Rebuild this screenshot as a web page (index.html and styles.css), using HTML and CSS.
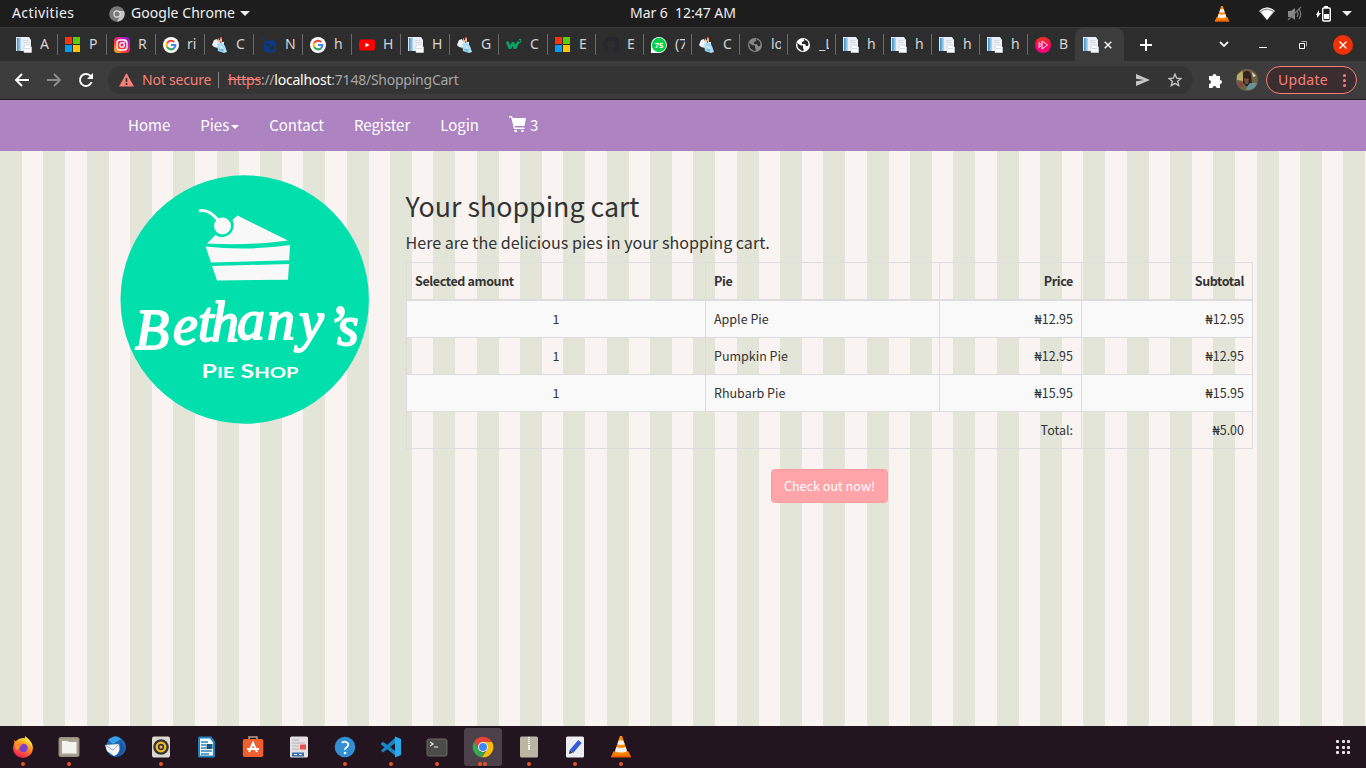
FILE: index.html
```html
<!DOCTYPE html>
<html lang="en">
<head>
<meta charset="utf-8">
<title>Shopping Cart</title>
<link rel="stylesheet" href="styles.css">
</head>
<body>
<svg width="0" height="0" class="defs">
  <defs>
    <linearGradient id="docg"><stop offset="0" stop-color="#3f8ecb"/><stop offset="1" stop-color="#b7dbf4"/></linearGradient>
    <linearGradient id="ig" x1="0" y1="1" x2="1" y2="0"><stop offset="0" stop-color="#fec935"/><stop offset=".35" stop-color="#f8402f"/><stop offset=".65" stop-color="#d61aa0"/><stop offset="1" stop-color="#6a22d6"/></linearGradient>
    <linearGradient id="fx" x1=".8" y1="0" x2=".3" y2="1"><stop offset="0" stop-color="#fff04a"/><stop offset=".45" stop-color="#ff8a1f"/><stop offset="1" stop-color="#f5125f"/></linearGradient>
    <linearGradient id="ps" x1="0" y1="0" x2="0" y2="1"><stop offset="0" stop-color="#f4391c"/><stop offset=".5" stop-color="#fb0560"/><stop offset="1" stop-color="#ff0080"/></linearGradient>
    <symbol id="doc" viewBox="0 0 16 16"><path fill="#dfe7ef" d="M0 0h5v14H0z"/><path fill="url(#docg)" d="M1 1h4v13H1z"/><path fill="#eceff4" d="M5 0h8l2 3v11H5z"/><path stroke="#d5dae3" d="M7 3.500h5M7 5.500h6"/><path fill="#fafbfd" stroke="#cbd2df" stroke-width=".7" d="M8 8h5l2.500 2v5.500H8z"/><path stroke="#d5dae3" d="M9 11.500h5"/></symbol>
    <symbol id="ms" viewBox="0 0 16 16"><path fill="#f8340c" d="M0 0h7v7H0z"/><path fill="#60ca05" d="M8 0h7v7H8z"/><path fill="#069cf4" d="M0 8h7v7H0z"/><path fill="#ffc506" d="M8 8h7v7H8z"/></symbol>
    <symbol id="insta" viewBox="0 0 16 16"><rect width="16" height="16" rx="4" fill="url(#ig)"/><g fill="none" stroke="#fff" stroke-width="1.300"><rect x="3" y="3" width="10" height="10" rx="3"/><circle cx="8" cy="8" r="2.300"/></g><circle cx="10.900" cy="5.100" r=".8" fill="#fff"/></symbol>
    <symbol id="google" viewBox="0 0 16 16"><circle cx="8" cy="8" r="8" fill="#fff"/><g fill="none" stroke-width="2.100"><path stroke="#ea4335" d="M4.200 6A4.400 4.400 0 0 1 11.200 5"/><path stroke="#fbbc05" d="M4.300 10.300A4.500 4.500 0 0 1 4.200 5.800"/><path stroke="#34a853" d="M4.200 10A4.400 4.400 0 0 0 10.900 11.400"/><path stroke="#4285f4" d="M8 8h4.400a4.400 4.400 0 0 1-1.600 3.400"/></g></symbol>
    <symbol id="person" viewBox="0 0 16 16"><path fill="#e8f2f5" d="M0 8l2-5 3-1 1 2 2-1 4 2v4L6 11l-4-1z"/><path fill="#f3b58e" d="M6 1h4v4H6z"/><path fill="#292c36" d="M6 0l1 3h1V1zM10 2h1.500v3H10z"/><path fill="#a6dcf5" d="M5 7l5-2 3 4 2 6-3 1-6-2z"/><path stroke="#fff" d="M1 6l5 3M8 9l5 5"/><path fill="#73b9e3" d="M6 12l6 0-1 3z"/><path fill="#e84037" d="M8 0h2v1.500H8zM8 4h1v2H8z"/></symbol>
    <symbol id="nuget" viewBox="0 0 16 16"><path fill="#083a8b" d="M6 3.500h5q4 0 4 4V12q0 3.500-4 3.500H7q-4 0-4-3.500V7q0-3.500 3-3.500z"/><circle cx="1.500" cy="1.500" r="1.100" fill="#083a8b"/><circle cx="6.500" cy="7.500" r="1.600" fill="#292c30"/><circle cx="10.700" cy="11" r="2.500" fill="#292c30"/></symbol>
    <symbol id="yt" viewBox="0 0 16 16"><rect y="2.500" width="16" height="11" rx="2.500" fill="#f00"/><path fill="#fff" d="M6.500 5.700v4.600L10.500 8z"/></symbol>
    <symbol id="w3" viewBox="0 0 16 16"><path fill="none" stroke="#0aa467" stroke-width="2.600" stroke-linejoin="bevel" d="M1 4.500l3 7 3-6 2 6 3.500-7"/><path fill="none" stroke="#0aa467" d="M13 2.500h2l-1 1.200q2 .2 .5 1.800H13"/></symbol>
    <symbol id="github" viewBox="0 0 16 16"><path fill="#24292f" d="M8 0a8 8 0 0 0-2.500 15.600c.4.100.5-.2.500-.4v-2.700c-2 .4-2.500-.8-3-1.500C2 10 3 10 3.600 11c.6.9 1.400.9 2.500.6C6.200 10.800 4 10.500 4 7.700c0-.8.300-1.500.8-2.100C4.600 5 4.600 4 5 3.200c0 0 1 0 2 .8h3c1-.8 2-.8 2-.8.400 1 .3 1.800.1 2.400 2 2.500.2 5.500-2.100 5.700.5.500.7 1 .7 1.800v2.200c0 .2.100.5.500.4A8 8 0 0 0 8 0z"/></symbol>
    <symbol id="wa" viewBox="0 0 16 16"><path fill="#fff" d="M0 16V7a8 8 0 1 1 8 9z"/><circle cx="8" cy="8" r="7.200" fill="#06cf49"/><text x="8" y="10.800" text-anchor="middle" font-size="7.800" font-weight="700" fill="#fff">75</text></symbol>
    <symbol id="globe" viewBox="0 0 16 16"><circle cx="8" cy="8" r="7" fill="currentColor"/><path fill="#292929" d="M2 6l4 2.500h2V11l1 2.500-2 .5-4-3zM8 2l2 0-1 2-2 1v2h3l1 2h2l.5-2-1-3z"/></symbol>
    <symbol id="play" viewBox="0 0 16 16"><circle cx="8" cy="8" r="8" fill="url(#ps)"/><path fill="none" stroke="#fff" stroke-width=".9" d="M4 5.500v5l3-2.500zM7 4v8l5.500-4z"/></symbol>
    <symbol id="vlc" viewBox="0 0 20 20"><path fill="#f57900" d="M3 14h14l2 5H1z"/><path fill="#ee5f00" d="M1 18h18v1.500H1z"/><path fill="#ff8c0a" d="M9 0h2l5 15q-6 3-12 0z"/><path fill="#f2f2f2" d="M8 4h4l1.300 3.500q-3.300 1.500-6.600 0zM5.800 10q4.200 2 8.400 0l1.200 4q-5.400 2-10.800 0z"/></symbol>
  </defs>
</svg>

<header class="topbar">
  <span class="activities">Activities</span>
  <svg class="app-ico" width="16" height="16" viewBox="0 0 16 16"><circle cx="8" cy="8" r="7.800" fill="#777"/><path fill="#c6c6c6" d="M8 5h7a7.700 7.700 0 0 1-7 10.500L11 10z"/><circle cx="8" cy="8" r="3.700" fill="#ddd"/><circle cx="8" cy="8" r="2.500" fill="#777"/></svg>
  <span class="app-name">Google Chrome</span><i class="caret-top"></i>
  <span class="clock">Mar 6&nbsp; 12:47 AM</span>
  <div class="status">
    <svg width="16" height="16"><use href="#vlc"/></svg>
    <svg class="wifi" width="16" height="14" viewBox="0 0 16 14"><path fill="#9b9b9b" d="M0 4q8-7 16 0l-8 9z"/><path fill="#fff" d="M2 5q6-4 12 0l-6 8z"/><path fill="none" stroke="#fff" d="M.5 4q7.500-6 15 0"/></svg>
    <svg class="mute" width="16" height="16" viewBox="0 0 16 16"><path fill="#888" d="M1 5h3l4-3v12L4 11H1z"/><path fill="none" stroke="#777" stroke-width="1.300" d="M10 5q2 3 0 6M12 3q3.500 5 0 10M1 14L14 1"/></svg>
    <svg class="batt" width="15" height="16" viewBox="0 0 15 16"><path fill="#fff" d="M3 4v3h2L1 12V9H0z"/><path fill="#fff" d="M8 0h4v2H8zM8 8h5v5H8z"/><rect x="6.700" y="2" width="7.600" height="13" rx="1" fill="none" stroke="#fff" stroke-width="1.400"/></svg>
    <i class="caret-top"></i>
  </div>
</header>

<div class="tabs">
  <div class="tab w"><svg><use href="#doc"/></svg><span>A</span></div>
  <div class="tab w"><svg><use href="#ms"/></svg><span>P</span></div>
  <div class="tab w"><svg><use href="#insta"/></svg><span>R</span></div>
  <div class="tab w"><svg><use href="#google"/></svg><span>ri</span></div>
  <div class="tab w"><svg><use href="#person"/></svg><span>C</span></div>
  <div class="tab w"><svg><use href="#nuget"/></svg><span>N</span></div>
  <div class="tab w"><svg><use href="#google"/></svg><span>h</span></div>
  <div class="tab w"><svg><use href="#yt"/></svg><span>H</span></div>
  <div class="tab w"><svg><use href="#doc"/></svg><span>H</span></div>
  <div class="tab w"><svg><use href="#person"/></svg><span>G</span></div>
  <div class="tab w"><svg><use href="#w3"/></svg><span>C</span></div>
  <div class="tab"><svg><use href="#ms"/></svg><span>E</span></div>
  <div class="tab"><svg><use href="#github"/></svg><span>E</span></div>
  <div class="tab"><svg><use href="#wa"/></svg><span>(7</span></div>
  <div class="tab"><svg><use href="#person"/></svg><span>C</span></div>
  <div class="tab grey"><svg><use href="#globe"/></svg><span>lo</span></div>
  <div class="tab"><svg><use href="#globe"/></svg><span>_L</span></div>
  <div class="tab"><svg><use href="#doc"/></svg><span>h</span></div>
  <div class="tab"><svg><use href="#doc"/></svg><span>h</span></div>
  <div class="tab"><svg><use href="#doc"/></svg><span>h</span></div>
  <div class="tab"><svg><use href="#doc"/></svg><span>h</span></div>
  <div class="tab last"><svg><use href="#play"/></svg><span>B</span></div>
  <div class="tab active"><svg><use href="#doc"/></svg><svg class="x" viewBox="0 0 8 8"><path d="M.7.700l6.600 6.600M7.300.700L.7 7.300" stroke="#f1f1f1" stroke-width="1.500"/></svg></div>
  <svg class="plus" width="12" height="12" viewBox="0 0 12 12"><path d="M6 0v12M0 6h12" stroke="#fff" stroke-width="2"/></svg>
  <div class="wincontrols">
    <svg width="10" height="7" viewBox="0 0 10 7"><path d="M1 1l4 4 4-4" fill="none" stroke="#eee" stroke-width="1.800"/></svg>
    <svg class="min" width="8" height="8" viewBox="0 0 8 8"><path d="M0 6.500h8" stroke="#fff"/></svg>
    <svg class="max" width="8" height="8" viewBox="0 0 8 8"><path d="M.5 2.500h5v5h-5z" fill="none" stroke="#fff"/><path d="M2.500.5h5v5" fill="none" stroke="#aaa"/></svg>
    <svg class="close" width="20" height="20" viewBox="0 0 20 20"><circle cx="10" cy="10" r="10" fill="#f03005"/><path d="M6.500 6.500l7 7M13.500 6.500l-7 7" stroke="#fff" stroke-width="1.400"/></svg>
  </div>
</div>

<div class="toolbar">
  <svg width="16" height="16" viewBox="0 0 16 16"><path d="M15 8H2M8 2L2 8l6 6" fill="none" stroke="#fff" stroke-width="1.900"/></svg>
  <svg width="16" height="16" viewBox="0 0 16 16"><path d="M1 8h13M8 2l6 6-6 6" fill="none" stroke="#8b8b8b" stroke-width="1.900"/></svg>
  <svg width="16" height="16" viewBox="0 0 16 16"><path d="M13.600 10A6 6 0 1 1 12.200 3.700L14 5.500" fill="none" stroke="#fff" stroke-width="1.900"/><path d="M15 1v6H9z" fill="#fff"/></svg>
  <div class="omnibox">
    <svg width="15" height="14" viewBox="0 0 15 14"><path fill="#f88078" d="M7.500 0L15 13.500H0z"/><path d="M7.500 5v4M7.500 10v2" stroke="#353535" stroke-width="1.700"/></svg>
    <span class="notsecure">Not secure</span><i class="bar"></i>
    <span class="url"><s>https</s>://<b>localhost</b>:7148/ShoppingCart</span>
    <svg class="send" width="14" height="12" viewBox="0 0 14 12"><path fill="#c5c5c5" d="M0 0l14 6-14 6V7.300L8 6 0 4.700z"/></svg>
    <svg class="star" width="14" height="14" viewBox="0 0 14 14"><path fill="none" stroke="#c5c5c5" stroke-width="1.400" d="M7 1.200l1.700 4 4.200.3-3.200 2.800 1 4.200L7 10.300l-3.700 2.200 1-4.200L1.100 5.500l4.200-.3z"/></svg>
  </div>
  <svg class="ext" width="15" height="15" viewBox="0 0 15 15"><path fill="#fff" d="M1 3h3.500a2 2 0 1 1 4 0H12v4a2 2 0 1 1 0 4v4H8.500a2 2 0 0 0-4 0H1v-4a2 2 0 0 0 0-4z"/></svg>
  <svg class="avatar" width="22" height="22" viewBox="0 0 22 22"><circle cx="11" cy="11" r="11" fill="#716043"/><path fill="#b8ad6b" d="M1 6l5-4 2 5-1 5-6-1z"/><path fill="#30231f" d="M7 4q5-5 8 1l1 9-5 4-4-4z"/><path fill="#7d4a3b" d="M8 9l5 1-1 5-3 0z"/><path fill="#65919a" d="M10 19l4-5 5 0 2 1q-3 6-10 6z"/><path fill="#dddbb8" d="M16 3l4 4-3 1z"/><path fill="#8d4040" d="M1 13l5 1 1 4-3 0z"/></svg>
  <div class="update"><span>Update</span><i></i></div>
</div>

<main class="page">
  <nav class="nav">
    <a>Home</a><a>Pies<i class="caret"></i></a><a>Contact</a><a>Register</a><a>Login</a>
    <a class="cart"><svg width="18" height="18" viewBox="0 0 18 18"><path fill="#fff" d="M0 1h3l.8 2H17l-1.500 8H5.600l.4 1.500h9.500V14H5L2.200 2.500H0zM5 15h3v2H5.700zM12 15h3l-.7 2h-2z"/></svg>3</a>
  </nav>
  <div class="content">
    <svg class="logo" width="250" height="250" viewBox="0 0 250 250">
      <circle cx="124.700" cy="124.500" r="124.200" fill="#00dfac"/>
      <g fill="#f8f8f8"><path d="M117.500 40.500L168 65.500Q128 71 87 68.500L95.500 60Q103 65 110 59Q116 52 112.500 45z"/><circle cx="102.500" cy="51" r="8.500"/><path d="M85.500 71.500Q128 76 170 70l-.8 15.200L91 87.500zM92 91l77-2-1 15.700-71 .8z"/></g>
      <path fill="none" stroke="#f8f8f8" stroke-width="3" d="M79 36q9-3 19 9"/>
      <text class="script" y="174 169 166 166 164 164 165 170 170" x="15 53 78 91 117 147 179 207 217">Bethany’s</text>
      <text class="pie" x="81.500" y="203" textLength="97" lengthAdjust="spacingAndGlyphs">P<tspan class="sc">IE</tspan> S<tspan class="sc">HOP</tspan></text>
    </svg>
    <section class="main">
      <h2>Your shopping cart</h2>
      <h4>Here are the delicious pies in your shopping cart.</h4>
      <table>
        <colgroup><col class="c1"><col class="c2"><col class="c3"><col class="c4"></colgroup>
        <thead><tr><th>Selected amount</th><th>Pie</th><th class="r">Price</th><th class="r">Subtotal</th></tr></thead>
        <tbody>
          <tr class="odd first"><td class="c">1</td><td>Apple Pie</td><td class="r">₦12.95</td><td class="r">₦12.95</td></tr>
          <tr><td class="c">1</td><td>Pumpkin Pie</td><td class="r">₦12.95</td><td class="r">₦12.95</td></tr>
          <tr class="odd"><td class="c">1</td><td>Rhubarb Pie</td><td class="r">₦15.95</td><td class="r">₦15.95</td></tr>
          <tr><td class="r" colspan="3">Total:</td><td class="r">₦5.00</td></tr>
        </tbody>
      </table>
      <div class="actions"><a class="btn">Check out now!</a></div>
    </section>
  </div>
</main>

<footer class="dock">
  <div class="app run"><svg viewBox="0 0 22 22"><circle cx="11" cy="12" r="10" fill="url(#fx)"/><path fill="#ffdc36" d="M13 0q7 5 7.500 11-4-5-8-6z"/><path fill="#ff9523" d="M2 4l4 3 5-1-2 5-5 3z"/><circle cx="11.500" cy="12" r="4.200" fill="#7542cf"/><path fill="#ff8028" d="M4 8q4-1 7 1-3 0-3 3z"/></svg></div>
  <div class="app run"><svg viewBox="0 0 22 22"><rect x=".5" y="1" width="21" height="20" rx="2.500" fill="#979080"/><rect x="2" y="2.500" width="18" height="17" rx="1" fill="#aaa394"/><path fill="#f4f2ed" d="M4 5h6l1 1h7.500v11.500H4z"/></svg></div>
  <div class="app"><svg viewBox="0 0 22 22"><circle cx="12" cy="11" r="10" fill="#2069b6"/><path fill="#38a0ea" d="M4 4q8-7 13-1l-8 5z"/><path fill="#f2f4f8" d="M1 9l14-1 1 9-6 3-7-5z"/><path fill="none" stroke="#9eacbf" d="M1 9l8 5 6-6"/><path fill="#1859a7" d="M15 4q9 7 2 15l-7 2q9-6 5-17z"/></svg></div>
  <div class="app run"><svg viewBox="0 0 22 22"><rect x="2" y="0.500" width="18" height="21" rx="2" fill="#dbd8cf"/><circle cx="11" cy="11" r="7.800" fill="#353535"/><circle cx="11" cy="11" r="4.300" fill="none" stroke="#f1bd21" stroke-width="2.300"/><circle cx="11" cy="11" r="1.500" fill="#efc24b"/></svg></div>
  <div class="app"><svg viewBox="0 0 22 22"><path fill="#237fbd" d="M2 2q0-1.500 1.500-1.500H15l4 5V20q0 1.500-1.500 1.500h-14Q2 21.500 2 20z"/><path fill="#f5fafc" d="M4 2.500h10l3 4v13H4z"/><path stroke="#2d85b9" stroke-width="1.500" d="M5 6h7M5 9h5M5 12h5M5 15h11M5 18h8"/><path fill="#185779" d="M10.500 8h6v5h-6z"/></svg></div>
  <div class="app"><svg viewBox="0 0 22 22"><path fill="none" stroke="#bba388" stroke-width="1.500" d="M7 4V1h8v3"/><rect x=".8" y="3" width="20.500" height="18" rx="2" fill="#ef602f"/><path stroke="#fff" stroke-width="2" fill="none" d="M7 16l4-9 4 9M5 13h12"/></svg></div>
  <div class="app"><svg viewBox="0 0 22 22"><rect x="2" y=".5" width="18" height="21" rx="1.500" fill="#e4e1e3"/><path stroke="#b5b0b6" stroke-width="1.200" d="M4 4h7M4 7h13M4 10h7M4 13h7"/><path fill="#e8504d" d="M12 8.500h6v5h-6z"/><path fill="#386ca6" d="M4 16.500h12v4H4z"/><path stroke="#fff" d="M6 18.500h3M11 18.500h3"/></svg></div>
  <div class="app run"><svg viewBox="0 0 22 22"><circle cx="11" cy="11" r="10.300" fill="#338fd3"/><path d="M8 7q1-2 4-1 4 2 1 5-2 1-2 3" fill="none" stroke="#fff" stroke-width="1.800"/><circle cx="11" cy="17" r="1.300" fill="#fff"/></svg></div>
  <div class="app run"><svg viewBox="0 0 22 22"><path fill="#1687cc" d="M1 7.500l2-1.700L16 15.500v4.500L1 8.500z"/><path fill="#1685c5" d="M1 14.500L16 1v5.500L3 16.500z"/><path fill="#29a8ed" d="M15 .5L21 3v16l-6 2.500z"/></svg></div>
  <div class="app run"><svg viewBox="0 0 22 22"><rect x="1" y="3" width="20" height="17" rx="2" fill="#4b4c4a" stroke="#6a6866"/><path d="M4 6l3 2-3 2M8 11h4" fill="none" stroke="#eee" stroke-width="1.200"/></svg></div>
  <div class="app focus"><svg viewBox="0 0 22 22"><path fill="#ea4335" d="M2.300 5.500A10.300 10.300 0 0 1 20 6H11a5 5 0 0 0-4.500 7z"/><path fill="#34a853" d="M2.200 5.500l4.500 8A5 5 0 0 0 13 15.700l-3 5.500A10.300 10.300 0 0 1 2.200 5.500z"/><path fill="#fbbc05" d="M11 6h9a10.300 10.300 0 0 1-10 15.300l5.300-8A5 5 0 0 0 11 6z"/><circle cx="11" cy="11" r="5" fill="#fff"/><circle cx="11" cy="11" r="4" fill="#4285f4"/></svg></div>
  <div class="app run"><svg viewBox="0 0 22 22"><rect x="2" y=".5" width="18" height="21" rx="1.500" fill="#bcb5a4"/><path stroke="#fff" stroke-width="2" stroke-dasharray="1 1" d="M11 1v12"/><path fill="#eee" d="M10 10h2v4h-2z"/></svg></div>
  <div class="app run"><svg viewBox="0 0 22 22"><rect x="2" y=".5" width="18" height="21" rx="1.500" fill="#ececf3"/><path stroke="#355bd5" stroke-width="4.500" d="M7.500 15.500l8.500-10"/><path fill="#333" d="M5 18l.7-4 3 2.700z"/></svg></div>
  <div class="app run"><svg viewBox="0 0 20 20"><use href="#vlc"/></svg></div>
  <div class="grid-ico"><i></i><i></i><i></i><i></i><i></i><i></i><i></i><i></i><i></i></div>
</footer>
</body>
</html>
```

FILE: styles.css
```css
* { box-sizing: border-box; }
body { margin: 0; width: 1366px; height: 768px; overflow: hidden; display: flex; flex-direction: column; font-family: "Noto Sans", "Open Sans", sans-serif; }
svg { display: block; flex: none; }
.defs { position: absolute; }

.topbar { height: 27px; flex: none; background: #1d1d1d; display: flex; align-items: center; color: #eee; font-size: 14px; padding-left: 12px; }
.topbar span { line-height: 26px; height: 27px; white-space: nowrap; }
.activities { width: 97px; letter-spacing: .4px; }
.app-name { margin-left: 6px; width: 104px; letter-spacing: .05px; }
.caret-top { border: 5px solid transparent; border-top-color: #eee; border-bottom: 0; margin-left: 5px; }
.clock { margin-left: 380px; width: 110px; letter-spacing: -.03px; }
.status { margin-left: auto; display: flex; align-items: center; padding-right: 14px; }
.wifi { margin-left: 29px; }
.mute { margin-left: 12px; }
.batt { margin-left: 13px; }
.status .caret-top { margin-left: 11px; }

.tabs { height: 34px; flex: none; background: #2d2d2d; border-top: 1px solid #3b3b3b; display: flex; align-items: center; padding-left: 9px; }
.tab { width: 48px; height: 21px; flex: none; border-right: 1px solid #696969; padding-left: 7px; display: flex; align-items: center; overflow: hidden; color: #d5d5d5; font-size: 14px; }
.tab svg { width: 16px; height: 16px; color: #fff; }
.tab.grey svg { color: #858585; }
.tab.w { width: 49px; }
.tab span { margin-left: 8px; width: 9.500px; height: 21px; overflow: hidden; line-height: 19px; white-space: nowrap; }
.tab.last { width: 47px; border: 0; }
.tab.active { width: 49px; height: 33px; border: 0; border-radius: 8px 8px 0 0; background: #3c3c3c; padding-left: 8px; }
.tab.active .x { width: 8px; height: 8px; margin-left: 5px; }
.plus { margin-left: 16px; }
.wincontrols { margin-left: auto; display: flex; align-items: center; padding-right: 13px; }
.min { margin-left: 30px; }
.max { margin-left: 32px; }
.close { margin-left: 26px; }

.toolbar { height: 39px; flex: none; background: #3c3c3c; border-bottom: 1px solid #211b22; display: flex; align-items: center; padding: 0 9px 0 14px; gap: 16px; font-size: 14px; }
.omnibox { width: 1085px; height: 28px; margin-left: -2px; border-radius: 14px; background: #343434; display: flex; align-items: center; padding: 0 11px; flex: none; line-height: 28px; white-space: nowrap; }
.notsecure { color: #f88078; margin-left: 8px; width: 69px; letter-spacing: -.2px; }
.bar { width: 1px; height: 16px; background: #858585; margin: 0 9px 0 7px; }
.url { color: #a5a5a5; letter-spacing: -.24px; }
.url s { color: #f88078; }
.url b { color: #fff; font-weight: 400; }
.send { margin-left: auto; margin-right: 1px; }
.star { margin: 0 0 0 18px; }
.omnibox .send { transform: translateX(1px); }
.ext { margin-left: -1px; }
.avatar { margin-left: -3px; }
.update { margin-left: -8px; width: 91px; height: 28px; flex: none; border: 1px solid #f88078; border-radius: 14px; background: #3b2d2f; color: #f88078; display: flex; align-items: center; padding-left: 11px; line-height: 24px; }
.update span { width: 51px; letter-spacing: .3px; }
.update i { width: 3px; height: 3px; border-radius: 50%; background: #f88078; box-shadow: 0 -5px #f88078, 0 5px #f88078; margin-left: 14px; }

.page { height: 626px; flex: none; font-family: "Noto Sans CJK JP", "Noto Sans", sans-serif; color: #333; background: linear-gradient(90deg, #e4e5d9 0 22px, #f9f3f1 22px 43px, #e4e5d9 43px 65px, #f9f3f1 65px 87px, #e4e5d9 87px 109px, #f9f3f1 109px 130px) 0 0 / 130px 100%; }
.nav { height: 51px; background: #ad84c1; display: flex; align-items: center; gap: 30px; padding-left: 128px; color: #fff; font-size: 15px; }
.nav a { display: flex; align-items: center; height: 51px; line-height: 49px; padding-bottom: 2px; }
.caret { border: 4px solid transparent; border-top-color: #fff; border-bottom: 0; margin: 4px 0 0 2px; }
.cart svg { margin: -2px 3px 0 0; }
.content { display: flex; padding: 24px 0 0 120px; }
.script { font: italic 400 56px "Liberation Serif", serif; fill: #fff; stroke: #fff; stroke-width: 1.800px; stroke-linejoin: round; }
.pie { font: 700 18.500px Lato, sans-serif; fill: #fff; }
.sc { font-size: 15px; }
.main { margin-left: 36px; width: 847px; padding-top: 11px; }
h2 { font-weight: 400; font-size: 26.800px; line-height: 40px; margin: 0 0 0 -.5px; }
h4 { font-weight: 400; font-size: 16.100px; line-height: 24px; margin: 4px 0 8px -.5px; }
table { border-collapse: collapse; table-layout: fixed; width: 847px; font-size: 12.500px; }
.c1 { width: 299px; } .c2 { width: 234px; } .c3 { width: 142px; } .c4 { width: 171px; }
th, td { border: 1px solid #ddd; padding: 0 8px; line-height: 20px; height: 37px; text-align: left; white-space: nowrap; }
th { border-bottom-width: 2px; height: 37px; padding-top: 1px; letter-spacing: -.38px; }
.first td { height: 38px; }
.odd { background: #f9f9f9; }
th.r, td.r { text-align: right; }
td.c { text-align: center; }
.actions { display: flex; justify-content: center; padding-top: 20px; }
.btn { width: 117px; height: 34px; border: 1px solid #ff9a9f; border-radius: 4px; background: #ffa5aa; color: #fff; font-size: 12.600px; line-height: 32px; text-align: center; white-space: nowrap; }

.dock { height: 42px; flex: none; background: #22151f; display: flex; align-items: center; }
.app { width: 38px; height: 38px; margin: 0 4px; border-radius: 3px; display: flex; align-items: center; justify-content: center; position: relative; flex: none; }
.app svg { width: 22px; height: 22px; }
.run::after, .focus::after { content: ""; position: absolute; left: 17px; bottom: 0; width: 4px; height: 4px; border-radius: 50%; background: #e95420; }
.focus { background: #4c414a; }
.focus::after { left: 14px; box-shadow: 5px 0 #e95420; }
.grid-ico { margin: 0 16px 0 auto; display: grid; grid-template-columns: repeat(3, 3px); gap: 2.500px; }
.grid-ico i { height: 3px; background: #e8e6e8; border-radius: 1px; }
```
